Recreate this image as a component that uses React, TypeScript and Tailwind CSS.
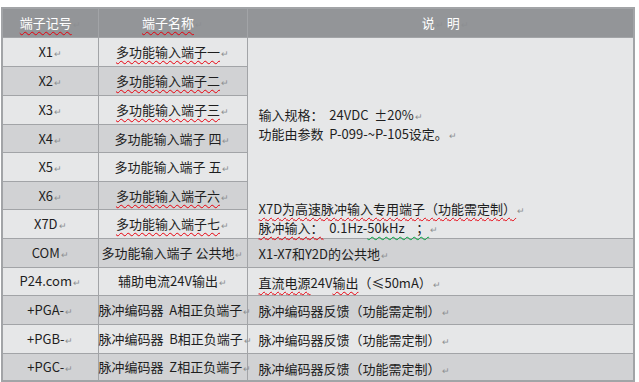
import React from "react";

const font = { fontFamily: '"Noto Sans CJK SC", "Noto Sans", sans-serif' };

const Ret = () => <span className="text-[9px] text-[#8d8f92] ml-[1px]">↵</span>;

const Wavy = ({ children, green }: { children: React.ReactNode; green?: boolean }) => (
  <span
    className={`underline decoration-wavy decoration-1 underline-offset-[3px] ${
      green ? "decoration-green-600" : "decoration-red-600"
    }`}
  >
    {children}
  </span>
);

type Row = { id: string; name: React.ReactNode; h: string; dark: boolean; desc?: React.ReactNode };

const topRows: Row[] = [
  { id: "X1", name: <Wavy>多功能输入端子一</Wavy>, h: "h-[29px]", dark: false },
  { id: "X2", name: <Wavy>多功能输入端子二</Wavy>, h: "h-[29px]", dark: true },
  { id: "X3", name: <Wavy>多功能输入端子三</Wavy>, h: "h-[29px]", dark: false },
  { id: "X4", name: "多功能输入端子 四", h: "h-[28px]", dark: true },
  { id: "X5", name: "多功能输入端子 五", h: "h-[29px]", dark: false },
  { id: "X6", name: <Wavy>多功能输入端子六</Wavy>, h: "h-[28px]", dark: true },
  { id: "X7D", name: <Wavy>多功能输入端子七</Wavy>, h: "h-[28px]", dark: false },
];

const bottomRows: Row[] = [
  { id: "COM", name: "多功能输入端子 公共地", h: "h-[29px]", dark: true, desc: "X1-X7和Y2D的公共地" },
  {
    id: "P24.com",
    name: "辅助电流24V输出",
    h: "h-[28px]",
    dark: false,
    desc: (
      <>
        <Wavy>直流电源</Wavy>24V<Wavy>输出</Wavy>（≤50mA）
      </>
    ),
  },
  { id: "+PGA-", name: "脉冲编码器  A相正负端子", h: "h-[29px]", dark: true, desc: "脉冲编码器反馈（功能需定制）" },
  { id: "+PGB-", name: "脉冲编码器  B相正负端子", h: "h-[29px]", dark: false, desc: "脉冲编码器反馈（功能需定制）" },
  { id: "+PGC-", name: "脉冲编码器  Z相正负端子", h: "h-[28px]", dark: true, desc: "脉冲编码器反馈（功能需定制）" },
];

const cell = "border border-[#a2a4a7] text-[13px] text-[#1e1e1e] whitespace-pre p-0";

export default function App() {
  return (
    <div className="w-[639px] h-[382px] bg-white pt-[7px] pl-[1px]" style={font}>
      <table className="border-collapse table-fixed border-2 border-[#a2a4a7]" style={{ width: 634 }}>
        <colgroup>
          <col style={{ width: 96 }} />
          <col style={{ width: 149 }} />
          <col style={{ width: 387 }} />
        </colgroup>
        <tbody>
          <tr className="h-[29px] bg-[#939598]">
            <td className={`${cell} text-center text-white`}>
              <Wavy>端子记号</Wavy>
              <Ret />
            </td>
            <td className={`${cell} text-center text-white`}>
              <Wavy>端子名称</Wavy>
              <Ret />
            </td>
            <td className={`${cell} text-center text-white pl-[10px]`}>
              说<Ret /> 明<Ret />
            </td>
          </tr>
          {topRows.map((r, i) => (
            <tr key={r.id} className={`${r.h} ${r.dark ? "bg-[#d1d2d4]" : "bg-[#e6e7e8]"}`}>
              <td className={`${cell} text-center`}>
                {r.id}
                <Ret />
              </td>
              <td className={`${cell} text-center`}>
                {r.name}
                <Ret />
              </td>
              {i === 0 && (
                <td rowSpan={7} className={`${cell} bg-[#e6e7e8] align-top pl-[11px]`}>
                  <div className="flex flex-col pt-[68px] leading-[17px]">
                    <div>
                      输入规格：  24VDC  ±20%
                      <Ret />
                    </div>
                    <div>
                      功能由参数  P-099-~P-105设定。
                      <Ret />
                    </div>
                    <div className="mt-[56px]">
                      <Wavy>X7D为高速脉冲输入专用端子（功能需定制）</Wavy>
                      <Ret />
                    </div>
                    <div>
                      <Wavy>脉冲输入：</Wavy>  0.1Hz-<Wavy green>50kHz    ；</Wavy>
                      <Ret />
                    </div>
                  </div>
                </td>
              )}
            </tr>
          ))}
          {bottomRows.map((r) => (
            <tr key={r.id} className={`${r.h} ${r.dark ? "bg-[#d1d2d4]" : "bg-[#e6e7e8]"}`}>
              <td className={`${cell} text-center`}>
                {r.id}
                <Ret />
              </td>
              <td className={`${cell} text-center`}>
                {r.name}
                <Ret />
              </td>
              <td className={`${cell} pl-[11px] pt-[3px]`}>
                {r.desc}
                <Ret />
              </td>
            </tr>
          ))}
        </tbody>
      </table>
    </div>
  );
}
